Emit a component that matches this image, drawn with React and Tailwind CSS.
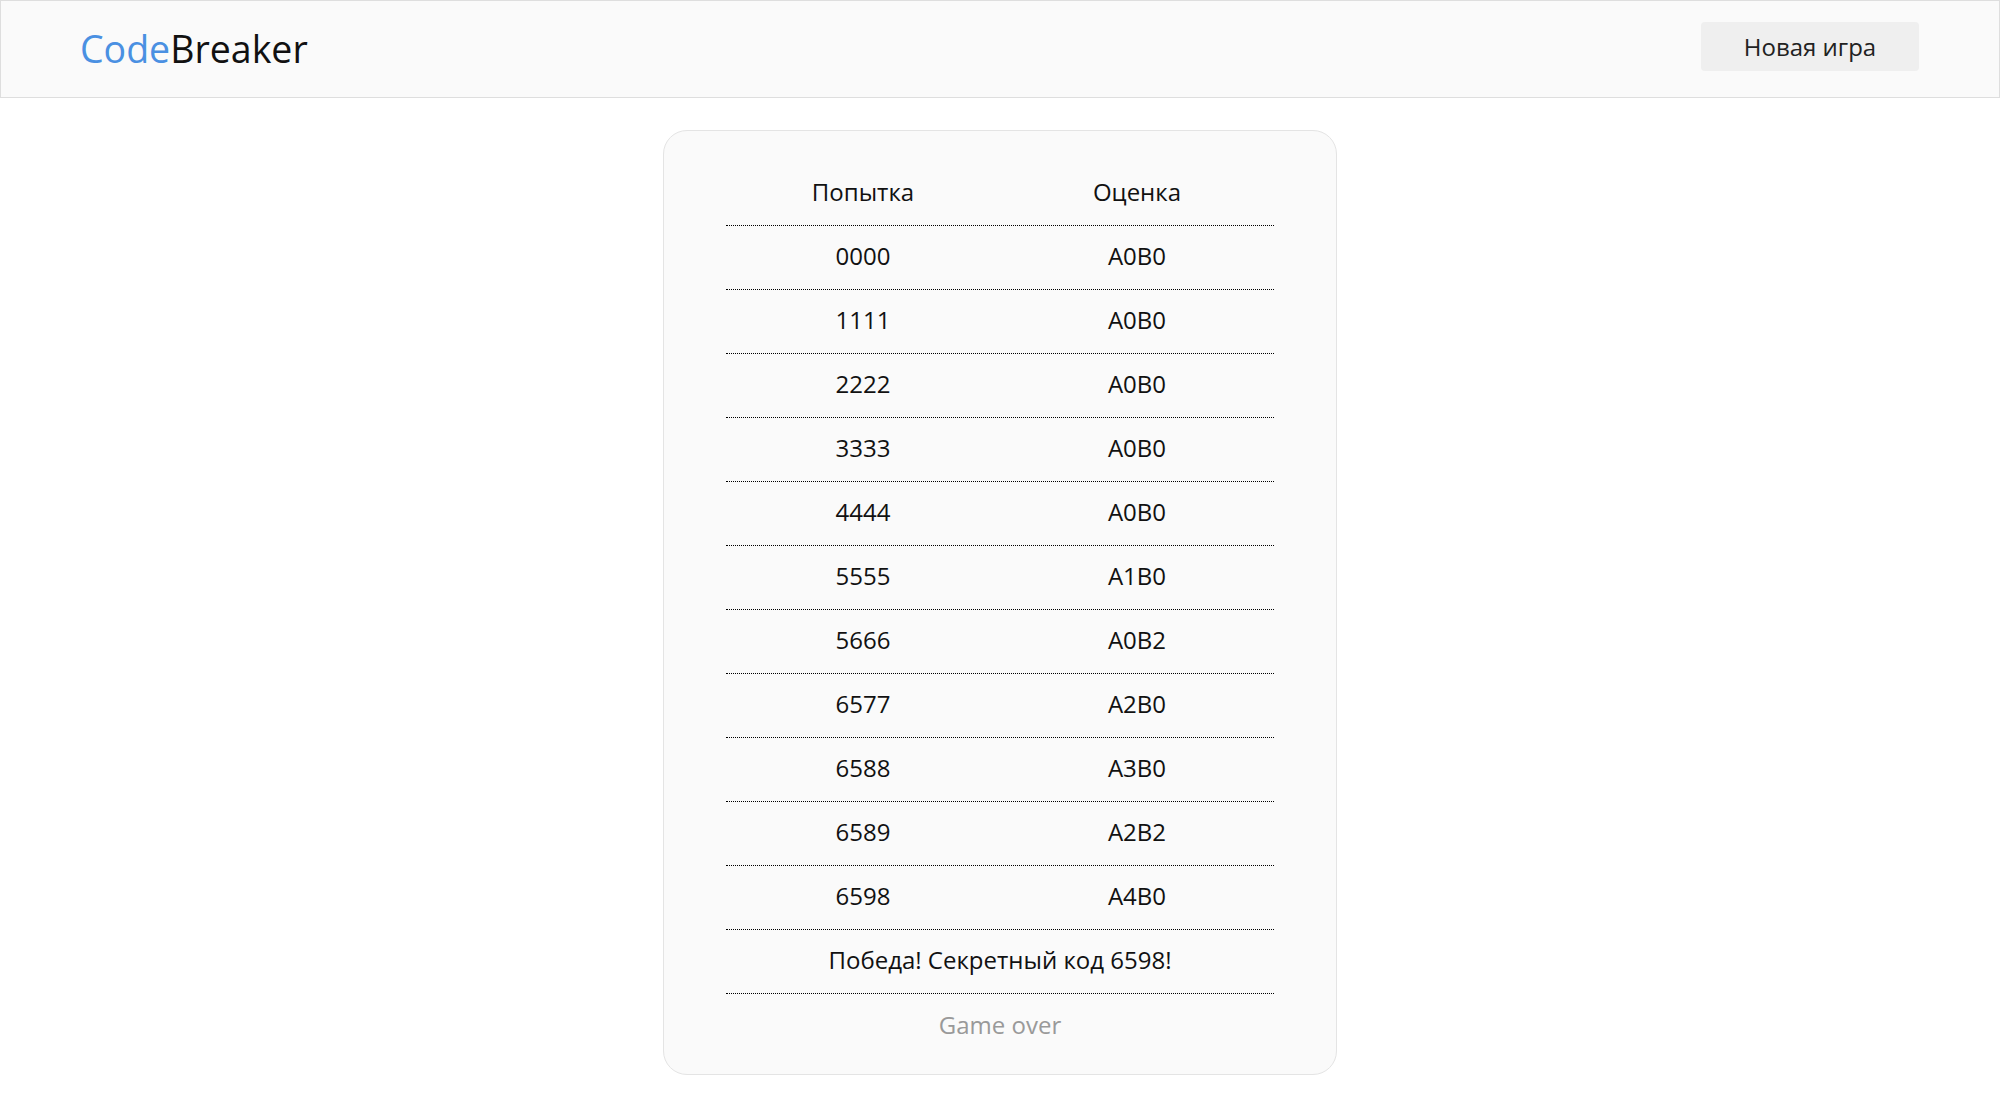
const GUESSES = [
  ['0000', 'A0B0'],
  ['1111', 'A0B0'],
  ['2222', 'A0B0'],
  ['3333', 'A0B0'],
  ['4444', 'A0B0'],
  ['5555', 'A1B0'],
  ['5666', 'A0B2'],
  ['6577', 'A2B0'],
  ['6588', 'A3B0'],
  ['6589', 'A2B2'],
  ['6598', 'A4B0'],
]

function App() {
  return (
    <div className="min-h-screen bg-white font-['Open_Sans',sans-serif] text-[#111]">
      <header className="flex h-[98px] items-center justify-between border border-[#dedede] bg-[#fafafa] pl-[79px] pr-[80px]">
        <div className="text-[37.5px] leading-none">
          <span className="text-[#4a90e2]">Code</span>
          <span>Breaker</span>
        </div>
        <button className="mb-[5px] h-[49px] w-[218px] rounded-[4px] bg-[#efefef] text-[24px] text-[#222]">
          Новая игра
        </button>
      </header>

      <main className="flex justify-center pt-[32px]">
        <div className="w-[674px] rounded-[24px] border border-[#e4e4e4] bg-[#fafafa] px-[62px] pb-[16px] pt-[31px]">
          <div className="text-[24px]">
            <div className="grid h-[64px] grid-cols-2 items-center border-b border-dotted border-[#000] pb-[3px] text-center">
              <div>Попытка</div>
              <div>Оценка</div>
            </div>
            {GUESSES.map(([guess, score]) => (
              <div
                key={guess}
                className="grid h-[64px] grid-cols-2 items-center border-b border-dotted border-[#000] pb-[3px] text-center"
              >
                <div>{guess}</div>
                <div>{score}</div>
              </div>
            ))}
            <div className="flex h-[64px] items-center justify-center border-b border-dotted border-[#000] pb-[3px]">
              Победа! Секретный код 6598!
            </div>
            <div className="flex h-[64px] items-center justify-center pb-[3px] text-[#999]">Game over</div>
          </div>
        </div>
      </main>
    </div>
  )
}

export default App
